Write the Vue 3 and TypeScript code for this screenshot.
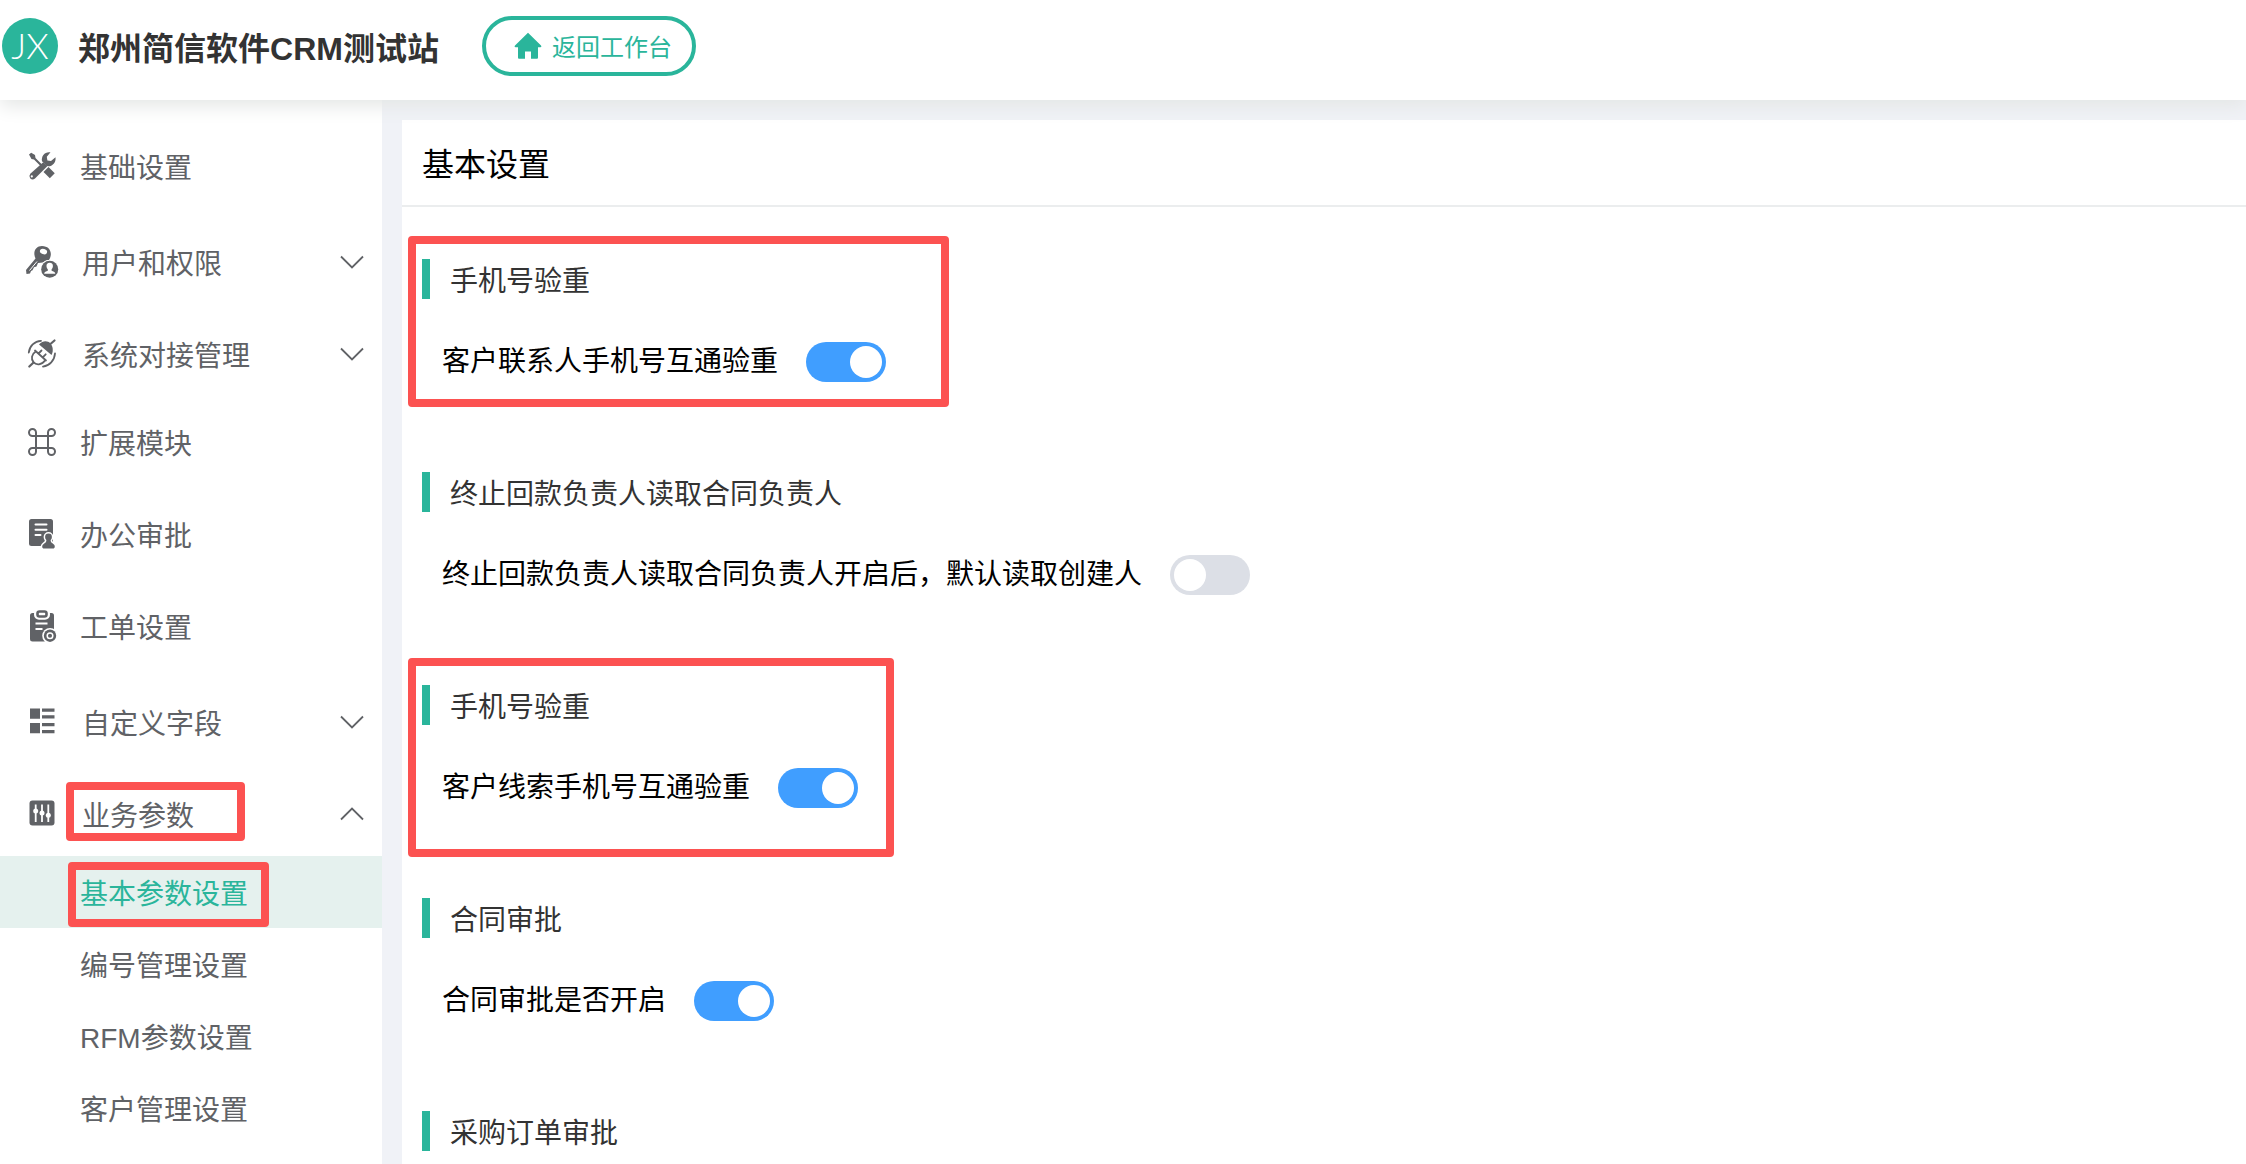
<script setup lang="ts">
import { ref } from 'vue'

interface MenuItem {
  icon: string
  label: string
  group: boolean
  open?: boolean
  marked?: boolean
  children?: string[]
}

interface Setting {
  id: string
  title: string
  label?: string
  on: boolean
  mark?: string
}

const siteName = '郑州简信软件CRM测试站'

const menu = ref<MenuItem[]>([
  { icon: 'tools', label: '基础设置', group: false },
  { icon: 'key', label: '用户和权限', group: true },
  { icon: 'plug', label: '系统对接管理', group: true },
  { icon: 'command', label: '扩展模块', group: false },
  { icon: 'approval', label: '办公审批', group: false },
  { icon: 'ticket', label: '工单设置', group: false },
  { icon: 'fields', label: '自定义字段', group: true },
  {
    icon: 'sliders',
    label: '业务参数',
    group: true,
    open: true,
    marked: true,
    children: ['基本参数设置', '编号管理设置', 'RFM参数设置', '客户管理设置'],
  },
])

const activeChild = ref('基本参数设置')

const settings = ref<Setting[]>([
  { id: 'contact-phone', title: '手机号验重', label: '客户联系人手机号互通验重', on: true, mark: 'mark-contact' },
  {
    id: 'refund-owner',
    title: '终止回款负责人读取合同负责人',
    label: '终止回款负责人读取合同负责人开启后，默认读取创建人',
    on: false,
  },
  { id: 'lead-phone', title: '手机号验重', label: '客户线索手机号互通验重', on: true, mark: 'mark-lead' },
  { id: 'contract', title: '合同审批', label: '合同审批是否开启', on: true },
  { id: 'purchase', title: '采购订单审批', on: false },
])

// Latin runs are set in their own family, so a label is cut at its script changes.
function runs(text: string): { text: string; latin: boolean }[] {
  return text
    .split(/([A-Za-z]+)/)
    .filter((part) => part !== '')
    .map((part) => ({ text: part, latin: /^[A-Za-z]/.test(part) }))
}
</script>

<template>
  <div class="app">
    <header class="topbar">
      <svg class="logo" viewBox="0 0 56 56" aria-label="JX">
        <circle cx="28" cy="28" r="28" fill="#2ab59b" />
        <text x="28" y="41" text-anchor="middle" class="logo-text">JX</text>
      </svg>
      <h1 class="site-name"><span v-for="(run, i) in runs(siteName)" :key="i" :class="{ latin: run.latin }">{{ run.text }}</span></h1>
      <button type="button" class="back">
        <svg class="home" viewBox="0 0 28 28" aria-hidden="true">
          <path d="M14 .8 27 13.6c.7.9.4 1.6-.6 1.6H24v10.300c0 .9-.5 1.300-1.300 1.300H17v-7.300h-6v7.300H5.300c-.8 0-1.300-.4-1.300-1.300V15.200H1.600c-1 0-1.300-.7-.6-1.600z" fill="currentColor" />
        </svg>
        <span>返回工作台</span>
      </button>
    </header>

    <div class="body">
      <nav class="sidebar">
        <div v-for="item in menu" :key="item.label">
          <component
            :is="item.group ? 'button' : 'a'"
            class="item"
            :class="{ group: item.group }"
            :href="item.group ? undefined : '#'"
            :type="item.group ? 'button' : undefined"
            :aria-expanded="item.group ? !!item.open : undefined"
          >
            <svg class="icon" viewBox="0 0 32 32" aria-hidden="true">
              <g v-if="item.icon === 'tools'">
                <path d="M3 4.500 5.200 2.800 9 5l.5 3L17 15.500l-1.500 1.500L8 9.500 5.500 9z" fill="currentColor" />
                <path d="M20 19.500l6.300 6.300" stroke="currentColor" stroke-width="7" />
                <path d="M17.200 12.200 21.500 16 9 28.500q-2.500 1.800-4.700 0-1.800-2.500 0-4.700z" fill="currentColor" />
                <path d="M24.500 2.300 20.800 6.800l.6 3.600 3.600.7 4.500-3.900c.8 6-4 9.900-8.600 8.900l-4.900-4.900C15 6 19 1.300 24.500 2.300z" fill="currentColor" />
                <circle cx="5.800" cy="26.400" r="1.100" fill="#fff" />
              </g>
              <g v-else-if="item.icon === 'key'">
                <path d="M16 0c6.500 0 10 5 8.500 10.500-.3 1.500-1 2.700-1.500 3.500-2.500 0-4.500 1-6 2.500L12 17l-1.500 3.500-2.500.8-1.500 3-1.500.7-1 2.500L.5 28 0 24 9.500 12.500C6.500 6 9.500 0 16 0z" fill="currentColor" />
                <ellipse cx="17.500" cy="5.500" rx="3.700" ry="2.600" transform="rotate(20 17.500 5.500)" fill="#fff" />
                <path d="M11 15.500 3.500 24.500" stroke="#fff" stroke-width="1" />
                <circle cx="23.700" cy="23.200" r="9.500" fill="#fff" />
                <circle cx="23.700" cy="23.200" r="8.500" fill="currentColor" />
                <path d="M23.700 16.800c2.200 0 3.400 1.500 3.200 3.500-.1 1.600-.8 2.400-1.300 3v1.500c1.600.6 3.500 1.200 3.700 3H18.100c.2-1.800 2.100-2.400 3.700-3v-1.500c-.5-.6-1.200-1.400-1.300-3-.2-2 1-3.500 3.200-3.500z" fill="#fff" />
              </g>
              <g v-else-if="item.icon === 'plug'" fill="none" stroke="currentColor" stroke-width="1.800" stroke-linecap="round">
                <path d="M13 6.500C17 2 22 3 24.200 5.200S28 12 25.500 17z" fill="currentColor" stroke="none" />
                <path d="M25 5.500 28.500 2.500M3.300 28.500l4-3.800" stroke-width="2.200" />
                <path d="M9 12.500 20 22.500M9.800 13.500C5.500 16 4.800 21 7.500 24.200s8 3 11.500-1.700M12.500 15.500l3-3M16.700 19.300l3-3" />
                <path d="M2.800 14.500C3.500 8 8.500 3 15 2.800M29 15.500c-.5 7-5.500 12.200-12 13.200" />
              </g>
              <path
                v-else-if="item.icon === 'command'"
                d="M10 10h12v12H10zM10 10V6.500A3.500 3.500 0 1 0 6.500 10zM22 10V6.500a3.500 3.500 0 1 1 3.500 3.500zM10 22v3.500A3.500 3.500 0 1 1 6.500 22zM22 22v3.500a3.500 3.500 0 1 0 3.500-3.500z"
                fill="none"
                stroke="currentColor"
                stroke-width="2"
              />
              <g v-else-if="item.icon === 'approval'">
                <rect x="3" y="1" width="24" height="27" rx="2.500" fill="currentColor" />
                <path d="M9.500 6.500h11M9.500 11.700h11M9.500 17h5" stroke="#fff" stroke-width="2" stroke-linecap="round" />
                <g fill="currentColor" stroke="#fff" stroke-width="3" paint-order="stroke">
                  <path d="M20.500 20.500h4l.4 3.500 3 2.500c1.500 1.500 1 4-.8 4h-9.200c-1.800 0-2.300-2.500-.8-4l3-2.500z" />
                  <circle cx="22.500" cy="19" r="3.400" />
                </g>
                <path d="M20.500 21h4l.4 4h-4.800z" fill="currentColor" />
              </g>
              <g v-else-if="item.icon === 'ticket'">
                <rect x="4" y="3" width="24" height="28.500" rx="2.500" fill="currentColor" />
                <rect x="10.500" y="1.200" width="11" height="6" rx="2.500" fill="#fff" stroke="#fff" stroke-width="5" />
                <rect x="11.500" y="1.500" width="9" height="5" rx="2" fill="#fff" stroke="currentColor" stroke-width="2.600" />
                <path d="M9.500 13.500h12M9.500 19h7" stroke="#fff" stroke-width="2.200" />
                <circle cx="24" cy="25.700" r="7.800" fill="#fff" />
                <circle cx="24" cy="25.700" r="6.200" fill="currentColor" />
                <circle cx="24" cy="25.700" r="2.800" fill="none" stroke="#fff" stroke-width="1.500" />
              </g>
              <path
                v-else-if="item.icon === 'fields'"
                d="M4 2.500h10v10.200H4zM16 2.500h12.500v3.200H16zM16 9.300h12.500v3.200H16zM4 17h10v10.200H4zM16 17h12.500v3.200H16zM16 24h12.500v3.200H16z"
                fill="currentColor"
              />
              <g v-else>
                <rect x="3.500" y="2.500" width="25" height="25" rx="3" fill="currentColor" />
                <path d="M9.700 6.500v17.500M16 6.500v17.500M22.300 6.500v17.500" stroke="#fff" stroke-width="1.800" />
                <g fill="#fff">
                  <circle cx="9.700" cy="13" r="2.500" />
                  <circle cx="16" cy="15" r="2.500" />
                  <circle cx="22.300" cy="17.300" r="2.500" />
                </g>
              </g>
            </svg>
            <span class="item-label">
              {{ item.label }}
              <span v-if="item.marked" class="mark mark-menu" aria-hidden="true"></span>
            </span>
            <svg v-if="item.group" class="chevron" viewBox="0 0 24 14" aria-hidden="true">
              <path :d="item.open ? 'M1 12.500 12 1.500l11 11' : 'M1 1.500l11 11 11-11'" fill="none" stroke="currentColor" stroke-width="1.800" />
            </svg>
          </component>

          <template v-if="item.open">
            <a
              v-for="child in item.children"
              :key="child"
              href="#"
              class="child"
              :class="{ active: child === activeChild }"
              @click.prevent="activeChild = child"
            >
              <span v-for="(run, i) in runs(child)" :key="i" :class="{ latin: run.latin }">{{ run.text }}</span>
              <span v-if="child === '基本参数设置'" class="mark mark-child" aria-hidden="true"></span>
            </a>
          </template>
        </div>
      </nav>

      <main class="card">
        <h2 class="card-title">基本设置</h2>
        <div class="settings">
          <section v-for="s in settings" :key="s.id" class="setting">
            <h3 class="setting-title">{{ s.title }}</h3>
            <div v-if="s.label" class="row">
              <label :for="s.id">{{ s.label }}</label>
              <input :id="s.id" v-model="s.on" type="checkbox" role="switch" class="switch" />
            </div>
            <span v-if="s.mark" class="mark" :class="s.mark" aria-hidden="true"></span>
          </section>
        </div>
      </main>
    </div>
  </div>
</template>

<style>
html,
body {
  margin: 0;
  height: 100%;
  overflow: hidden;
}

#app {
  height: 100%;
}
</style>

<style scoped>
.app {
  display: flex;
  flex-direction: column;
  height: 100vh;
  background: #f0f2f7;
  color: #000;
  font-family: "Noto Sans CJK SC", "Liberation Sans", sans-serif;
  font-size: 28px;
}

.latin {
  font-family: "Liberation Sans", sans-serif;
  line-height: 1;
}

.topbar {
  position: relative;
  z-index: 1;
  display: flex;
  flex: none;
  align-items: center;
  box-sizing: border-box;
  height: 100px;
  padding: 0 2px 8px;
  background: #fff;
  box-shadow: 0 6px 18px #e4e6e5;
}

.logo {
  flex: none;
  width: 56px;
  height: 56px;
}

.logo-text {
  fill: #fff;
  font-family: Lato, sans-serif;
  font-size: 36px;
  font-weight: 300;
}

.site-name {
  margin: 0 43px 0 20px;
  color: #333;
  font-size: 32px;
  font-weight: 700;
  line-height: 40px;
  white-space: nowrap;
}

.back {
  display: flex;
  align-items: center;
  gap: 10px;
  box-sizing: border-box;
  width: 214px;
  height: 60px;
  padding: 0 0 0 28px;
  border: 4px solid #2ab59b;
  border-radius: 30px;
  background: #fff;
  color: #2ab59b;
  font-family: inherit;
  font-size: 24px;
  line-height: 32px;
  white-space: nowrap;
}

.home {
  width: 28px;
  height: 28px;
}

.body {
  display: flex;
  flex: 1;
  gap: 20px;
  min-height: 0;
}

.sidebar {
  flex: none;
  box-sizing: border-box;
  width: 382px;
  padding-top: 20px;
  background: #fff;
  color: #606266;
}

.item {
  display: flex;
  align-items: center;
  gap: 22px;
  box-sizing: border-box;
  width: 100%;
  height: 92px;
  padding: 0 18px 0 26px;
  border: 0;
  background: none;
  color: inherit;
  font-family: inherit;
  font-size: 28px;
  line-height: 40px;
  text-align: left;
  text-decoration: none;
}

.group {
  gap: 24px;
  padding-top: 8px;
}

.icon {
  flex: none;
  width: 32px;
  height: 32px;
  overflow: visible;
}

.item-label {
  position: relative;
  flex: 1;
}

.chevron {
  flex: none;
  width: 24px;
  height: 14px;
}

.child {
  position: relative;
  display: block;
  padding-left: 80px;
  color: inherit;
  line-height: 72px;
  text-decoration: none;
}

.active {
  background: #e5f1ee;
  color: #2ab59b;
}

.card {
  flex: 1;
  min-width: 0;
  margin-top: 20px;
  overflow: hidden;
  background: #fff;
}

.card-title {
  margin: 0;
  padding: 0 20px;
  border-bottom: 2px solid #ebedee;
  font-size: 32px;
  font-weight: 400;
  line-height: 85px;
}

.settings {
  display: flex;
  flex-direction: column;
  gap: 90px;
  padding: 52px 20px;
}

.setting {
  position: relative;
}

.setting-title {
  margin: 0;
  padding-left: 20px;
  border-left: 8px solid #2ab59b;
  color: #333;
  font-size: 28px;
  font-weight: 400;
  line-height: 40px;
}

.row {
  display: flex;
  gap: 28px;
  padding: 40px 0 0 20px;
  line-height: 40px;
}

.switch {
  flex: none;
  box-sizing: border-box;
  width: 80px;
  height: 40px;
  margin: 3px 0 0;
  padding: 4px;
  border-radius: 20px;
  background: #dcdfe6;
  appearance: none;
}

.switch::before {
  display: block;
  width: 32px;
  height: 32px;
  border-radius: 50%;
  background: #fff;
  content: "";
}

.switch:checked {
  background: #409eff;
}

.switch:checked::before {
  margin-left: auto;
}

.mark {
  position: absolute;
  box-sizing: border-box;
  border: 8px solid #fc5251;
  border-radius: 4px;
  pointer-events: none;
}

.mark-menu {
  top: -12px;
  left: -16px;
  width: 179px;
  height: 59px;
}

.mark-child {
  top: 6px;
  left: 68px;
  width: 201px;
  height: 65px;
}

.mark-contact {
  top: -23px;
  left: -14px;
  width: 541px;
  height: 171px;
}

.mark-lead {
  top: -27px;
  left: -14px;
  width: 486px;
  height: 199px;
}
</style>
